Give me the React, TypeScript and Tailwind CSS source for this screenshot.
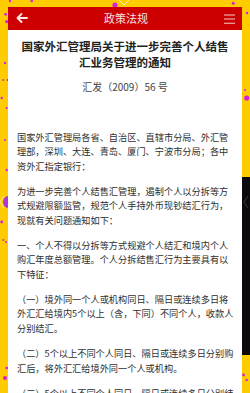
const paragraphs: string[][] = [
  [
    "国家外汇管理局各省、自治区、直辖市分局、外汇管",
    "理部，深圳、大连、青岛、厦门、宁波市分局；各中",
    "资外汇指定银行：",
  ],
  [
    "为进一步完善个人结售汇管理，遏制个人以分拆等方",
    "式规避限额监管，规范个人手持外币现钞结汇行为，",
    "现就有关问题通知如下：",
  ],
  [
    "一、个人不得以分拆等方式规避个人结汇和境内个人",
    "购汇年度总额管理。个人分拆结售汇行为主要具有以",
    "下特征：",
  ],
  [
    "（一）境外同一个人或机构同日、隔日或连续多日将",
    "外汇汇给境内5个以上（含，下同）不同个人，收款人",
    "分别结汇。",
  ],
  ["（二）5个以上不同个人同日、隔日或连续多日分别购", "汇后，将外汇汇给境外同一个人或机构。"],
  [
    "（三）5个以上不同个人同日、隔日或连续多日分别结",
    "汇后，将人民币资金存入或汇入同一个人或机构的人",
    "民币账户。",
  ],
];

// magenta dots on the yellow frame
const dots: [number, number, number][] = [
  [10, 1, 1.2],
  [31.7, 1, 1.3],
  [115, 5, 2.6],
  [233.3, 3.3, 1.5],
  [247, 13, 1.3],
  [5.7, 14.3, 1.4],
  [6.7, 21.7, 1.6],
  [5, 63, 1.2],
  [3.3, 80, 1],
  [7.5, 80, 1],
  [1.7, 98, 1.2],
  [6.7, 108, 1],
  [246.7, 98, 2.6],
  [245, 90, 1],
  [5, 140, 1],
  [6.7, 170, 1.2],
  [1.7, 222, 1.4],
  [3.3, 240, 1],
  [6, 242, 1],
  [6.7, 368, 1.3],
  [5, 378, 2],
  [243.5, 375, 1.4],
  [246.7, 380, 1.2],
];

export default function App() {
  return (
    <div
      className="relative h-[393px] w-[250px] overflow-hidden bg-[#ffcc00]"
      style={{ fontFamily: '"Noto Sans CJK SC", "Noto Sans", sans-serif' }}
    >
      <svg className="absolute inset-0" width="250" height="393" viewBox="0 0 250 393">
        <rect x="242" y="177" width="8" height="178" fill="#0c0a0c" />
        <path d="M248 196 L244 202 L248 208" fill="none" stroke="#3a3a3a" strokeWidth="1" />
        <path d="M8 196 A5 6 0 0 0 8 208 Z" fill="#b03ad0" />
        <path d="M4 196 L0 202 L4 208" fill="none" stroke="#f3e6b0" strokeWidth="1" />
        <path d="M119 0 L124 5 L129 0" fill="none" stroke="#fff2c0" strokeWidth="1" />
        {dots.map(([x, y, r], i) => (
          <circle key={i} cx={x} cy={y} r={r} fill="#d61ee0" />
        ))}
      </svg>

      <div className="relative mx-[8px] mt-[7px] flex h-[386px] w-[234px] flex-col bg-white">
        <header className="flex h-[23px] shrink-0 items-center justify-between bg-[#cc0000] px-[8px]">
          <svg width="12" height="10" viewBox="0 0 12 10" className="mt-[-1px]">
            <path
              d="M11 5 H2 M5.5 1 L1.5 5 L5.5 9"
              fill="none"
              stroke="#fbe9e9"
              strokeWidth="1.8"
              strokeLinecap="round"
              strokeLinejoin="round"
            />
          </svg>
          <span className="text-[11px] leading-none text-[#f6e2e2]">政策法规</span>
          <svg width="11" height="10" viewBox="0 0 11 10" className="mr-[-1px]">
            <path d="M0 1 H11 M0 5 H11 M0 9.2 H11" stroke="#f2cccc" strokeWidth="1.1" />
          </svg>
        </header>

        <h1 className="mt-[7.7px] text-center text-[11.5px] font-bold leading-[16px] text-[#222]">
          国家外汇管理局关于进一步完善个人结售
          <br />
          汇业务管理的通知
        </h1>
        <p className="mt-[10px] text-center text-[10px] leading-[14px] text-[#444]">汇发（2009）56 号</p>

        <div className="mt-[36px] pl-[9px] pr-[8px] text-[9.2px] leading-[14.5px] text-[#2e2e2e]">
          {paragraphs.map((lines, i) => (
            <p key={i} className="mb-[10.6px]">
              {lines.map((line, j) => (
                <span key={j} className="block whitespace-nowrap">
                  {line}
                </span>
              ))}
            </p>
          ))}
        </div>
      </div>
    </div>
  );
}
